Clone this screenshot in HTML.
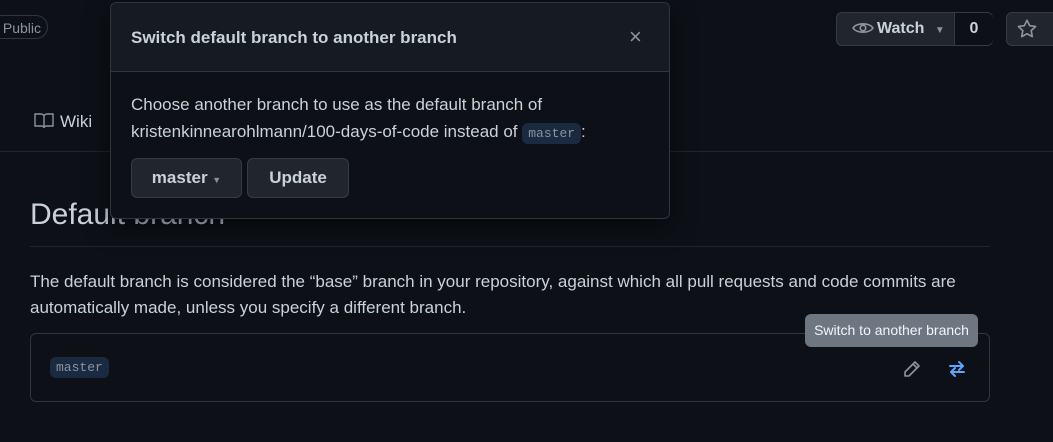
<!DOCTYPE html>
<html><head><style>
body{margin:0;width:1053px;height:442px;background:#0d1117;font-family:"Liberation Sans",sans-serif;color:#c9d1d9;position:relative;overflow:hidden}
.a{position:absolute}
.pub{left:-10px;top:15px;width:58px;height:24px;border:1px solid #30363d;border-radius:12px;font-size:14px;line-height:24px;text-align:right;color:#8b949e;box-sizing:border-box;padding-right:6px}
.code{font-family:"Liberation Mono",monospace;font-size:13px;background:#1a2a40;color:#8b949e;border-radius:6px;padding:3px 6px}
.btn{border:1px solid #363b42;background:#21262d;border-radius:6px;color:#c9d1d9;font-weight:bold;font-size:17px;box-sizing:border-box;text-align:center}
</style></head><body>
<div class="a pub">Public</div>
<div class="a" style="left:34px;top:112px;font-size:17px;color:#c9d1d9"><svg width="20" height="18" viewBox="0 0 20 18" style="vertical-align:-3px;margin-right:6px"><path d="M1 2h6c1.5 0 3 1 3 2.5V16c0-1-1-2-2.5-2H1z M19 2h-6c-1.5 0-3 1-3 2.5V16c0-1 1-2 2.5-2H19z" fill="none" stroke="#8b949e" stroke-width="1.4"/></svg>Wiki</div>
<div class="a" style="left:0;top:151px;width:1053px;height:1px;background:#21262d"></div>
<div class="a" style="left:30px;top:198px;font-size:30px;color:#c9d1d9">Default branch</div>
<div class="a" style="left:30px;top:246px;width:960px;height:1px;background:#21262d"></div>
<div class="a" style="left:30px;top:269px;width:965px;font-size:17px;line-height:26px;color:#c9d1d9">The default branch is considered the “base” branch in your repository, against which all pull requests and code commits are automatically made, unless you specify a different branch.</div>
<div class="a" style="left:30px;top:333px;width:960px;height:69px;border:1px solid #30363d;border-radius:6px;box-sizing:border-box"></div>
<div class="a code" style="left:50px;top:357px">master</div>
<svg class="a" style="left:902px;top:359px" width="20" height="20" viewBox="0 0 20 20"><path d="M13 3l4 4-10 10H3v-4z M11 5l4 4" fill="none" stroke="#8b949e" stroke-width="1.6" stroke-linejoin="round"/></svg>
<svg class="a" style="left:947px;top:359px" width="20" height="20" viewBox="0 0 20 20"><path d="M3 7h13M12 3l4 4-4 4M17 13H4M8 9l-4 4 4 4" fill="none" stroke="#58a6ff" stroke-width="2" stroke-linecap="round" stroke-linejoin="round"/></svg>
<div class="a" style="left:805px;top:314px;width:173px;height:33px;background:#6e7681;border-radius:6px;color:#f0f6fc;font-size:14px;line-height:33px;text-align:center">Switch to another branch</div>
<div class="a btn" style="left:836px;top:12px;width:157px;height:34px;font-size:16px;line-height:32px;text-align:left"><svg width="22" height="16" viewBox="0 0 20 14" style="vertical-align:-3px;margin:0 3px 0 15px"><path d="M1 7c3-5 15-5 18 0c-3 5-15 5-18 0z" fill="none" stroke="#8b949e" stroke-width="1.5"/><circle cx="10" cy="7" r="2.5" fill="none" stroke="#8b949e" stroke-width="1.5"/></svg>Watch <span style="font-size:10px;color:#8b949e;margin-left:6px">▼</span></div>
<div class="a" style="left:954px;top:13px;width:38px;height:32px;background:#0d1117;border-left:1px solid #363b42;border-radius:0 6px 6px 0;color:#c9d1d9;font-weight:bold;font-size:16px;line-height:32px;text-align:center">0</div>
<div class="a btn" style="left:1006px;top:12px;width:80px;height:34px"><svg width="22" height="22" viewBox="0 0 20 20" style="margin:5px 0 0 -38px"><path d="M10 2l2.4 5 5.4.7-4 3.8 1 5.4L10 14.3 5.2 16.9l1-5.4-4-3.8 5.4-.7z" fill="none" stroke="#8b949e" stroke-width="1.5" stroke-linejoin="round"/></svg></div>
<div class="a" style="left:110px;top:2px;width:560px;height:217px;border:1px solid #30363d;border-radius:6px;background:#0d1117;box-sizing:border-box;overflow:hidden;box-shadow:0 8px 24px rgba(0,0,0,.6)">
<div style="height:68px;background:#161b22;border-bottom:1px solid #30363d;position:relative">
<div style="position:absolute;left:20px;top:25px;font-weight:bold;font-size:17px;color:#c9d1d9">Switch default branch to another branch</div>
<div style="position:absolute;left:518px;top:21px;font-size:22px;color:#8b949e">×</div>
</div>
<div style="position:absolute;left:20px;top:88px;font-size:17px;line-height:27px;color:#c9d1d9">Choose another branch to use as the default branch of<br>kristenkinnearohlmann/100-days-of-code instead of <span class="code">master</span>:</div>
<div class="btn" style="position:absolute;left:20px;top:155px;width:111px;height:40px;line-height:38px">master <span style="font-size:9px;color:#8b949e">▼</span></div>
<div class="btn" style="position:absolute;left:136px;top:155px;width:102px;height:40px;line-height:38px">Update</div>
</div>
</body></html>
